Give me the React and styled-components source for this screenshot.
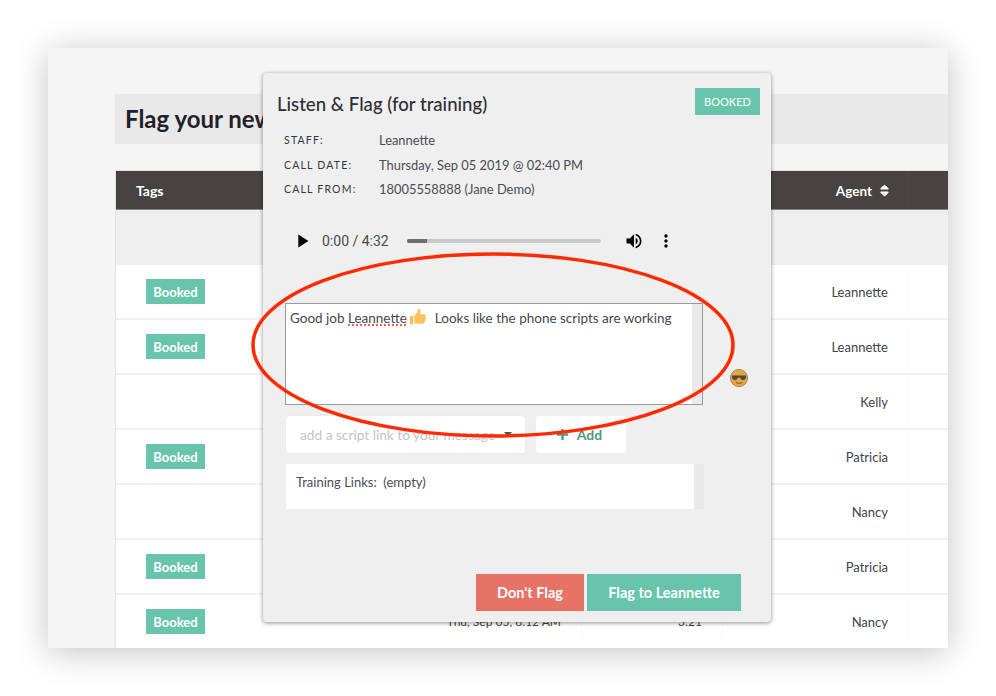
import React from "react";
import styled, { createGlobalStyle } from "styled-components";
import { FaPlus, FaSort } from "react-icons/fa";
import { MdMoreVert, MdPlayArrow, MdVolumeUp } from "react-icons/md";

const GlobalStyle = createGlobalStyle`
  html, body {
    margin: 0;
    background: #fff;
    font-family: "Lato", "Open Sans", sans-serif;
    color: #3c3c3c;
  }
  * { box-sizing: border-box; }
`;

const teal = "#68c4ab";

const Page = styled.div`
  width: 996px;
  height: 696px;
  padding: 48px;
  overflow: hidden;
`;
const Window = styled.div`
  position: relative;
  width: 900px;
  height: 600px;
  background: #f5f5f5;
  box-shadow: 0 4px 32px rgba(0, 0, 0, 0.24);
`;
const Clip = styled.div`
  width: 100%;
  height: 100%;
  padding: 46px 0 0 67px;
  overflow: hidden;
`;
const TitleBar = styled.div`
  height: 50px;
  padding: 0 0 1px 10px;
  background: #e9e9e9;
  display: flex;
  align-items: center;
  font-size: 24px;
  font-weight: 700;
  color: #1f2226;
`;
const Table = styled.div`
  margin: 26px 0 0 0;
  border-left: 1px solid #e4e4e4;
  border-top: 1px solid #e2e2e2;
`;
const columns = "311px 155px 141px 185px 1fr";
const HeaderRow = styled.div`
  display: grid;
  grid-template-columns: ${columns};
  height: 39px;
  background: #474342;
  border-bottom: 1px solid #8a8786;
  color: #fff;
  font-weight: 700;
`;
const HeaderCell = styled.div`
  display: flex;
  align-items: center;
  justify-content: ${(p) => (p.$left ? "flex-start" : "flex-end")};
  gap: 5px;
  padding: ${(p) => (p.$left ? "0 0 0 20px" : "1px 15px 0 0")};
  border-right: ${(p) => (p.$line ? "1px solid #4c4847" : "none")};
  font-size: ${(p) => (p.$left ? 14 : 13.500)}px;
  svg { font-size: 15px; }
`;
const FilterRow = styled.div`
  height: 55px;
  background: #efefef;
`;
const Row = styled.div`
  display: grid;
  grid-template-columns: ${columns};
  height: 55px;
  padding-bottom: 2px;
  background: #fff;
  box-shadow: inset 0 -2px 0 #f1f1f1;
  font-size: 12px;
  color: #40444a;
`;
const Cell = styled.div`
  display: flex;
  align-items: center;
  justify-content: ${(p) => (p.$left ? "flex-start" : "flex-end")};
  padding: ${(p) => (p.$left ? "0 0 0 30px" : "0 20px 0 0")};
  border-right: 1px solid ${(p) => (p.$line ? "#fafafa" : "transparent")};
  margin: 3px 0;
`;
const AgentCell = styled(Cell)`
  padding-right: 19px;
  font-size: 13px;
`;
const Tag = styled.span`
  width: 59px;
  height: 25px;
  background: ${teal};
  color: #fff;
  font-size: 13px;
  font-weight: 700;
  display: flex;
  align-items: center;
  justify-content: center;
`;

const Modal = styled.div`
  position: absolute;
  left: 215px;
  top: 25px;
  width: 508px;
  height: 549px;
  padding: 15px 11px 0 15px;
  display: flex;
  flex-direction: column;
  background: #efefef;
  border-radius: 4px;
  box-shadow: 0 1px 4px rgba(0, 0, 0, 0.45);
`;
const ModalHead = styled.div`
  display: flex;
  justify-content: space-between;
  align-items: flex-start;
`;
const ModalTitle = styled.h2`
  margin: 5px 0 0 -1px;
  font-size: 18.600px;
  line-height: 22px;
  font-weight: 500;
  color: #2d2f33;
`;
const StatusBadge = styled.span`
  width: 65px;
  height: 27px;
  background: ${teal};
  color: #f2fbf8;
  font-size: 11px;
  font-weight: 500;
  display: flex;
  align-items: center;
  justify-content: center;
`;
const Details = styled.div`
  margin: 0 0 0 6px;
  padding-top: 13px;
  display: grid;
  grid-template-columns: 95px 1fr;
  grid-auto-rows: 24.5px;
  align-items: center;
`;
const Label = styled.span`
  font-size: 10.5px;
  letter-spacing: 1.2px;
  color: #33363a;
`;
const Value = styled.span`
  font-size: 12.900px;
  color: #4a4d52;
`;
const Player = styled.div`
  margin: 27px 0 0 14px;
  height: 24px;
  display: flex;
  align-items: center;
  font-family: "Roboto", sans-serif;
  font-size: 14px;
  color: #4b4b4b;
`;
const PlayIcon = styled(MdPlayArrow)`
  font-size: 22px;
  margin-left: -1px;
  color: #000;
`;
const Time = styled.span`
  margin-left: 9px;
  width: 70px;
  white-space: nowrap;
`;
const Track = styled.div`
  margin-left: 15px;
  width: 194px;
  height: 4px;
  border-radius: 2px;
  background: #c8c8c8;
  overflow: hidden;
`;
const TrackFill = styled.div`
  height: 100%;
  background: #6e6e6e;
`;
const VolumeIcon = styled(MdVolumeUp)`
  margin-left: 23px;
  font-size: 20px;
  color: #000;
`;
const MoreIcon = styled(MdMoreVert)`
  margin-left: 12px;
  font-size: 20px;
  color: #000;
`;
const MessageRow = styled.div`
  margin: 50px 0 0 7px;
  display: flex;
  align-items: flex-end;
`;
const MessageBox = styled.div`
  width: 418px;
  height: 102px;
  border: 1px solid #9b9b9b;
  background: #fff;
  display: flex;
`;
const MessageText = styled.div`
  flex: 1;
  padding: 4px;
  font-size: 13.500px;
  line-height: 17px;
  color: #45484d;
  white-space: pre;
  display: block;
`;
const Misspelled = styled.span`
  text-decoration: underline dotted #f0605f 2px;
  text-underline-offset: 2px;
`;
const InlineEmoji = styled.svg`
  width: 18px;
  height: 18px;
  margin: 0 8px 0 2px;
  vertical-align: -3px;
`;
const ScrollTrack = styled.div`
  width: 10px;
  background: #e9e9e9;
`;
const EmojiButton = styled.svg`
  width: 18px;
  height: 18px;
  margin: 0 0 18px 27px;
  flex: none;
`;
const LinkRow = styled.div`
  margin: 11px 0 0 8px;
  display: flex;
  gap: 11px;
`;
const Select = styled.div`
  width: 239px;
  height: 37px;
  padding: 0 14px;
  background: #fff;
  border-radius: 3px;
  box-shadow: 0 0 1px rgba(0, 0, 0, 0.12);
  display: flex;
  align-items: center;
  justify-content: space-between;
  font-size: 13.700px;
  color: #c4c4c4;
`;
const Caret = styled.span`
  width: 0;
  height: 0;
  border: 4px solid transparent;
  border-top: 5px solid #555;
  margin-top: 5px;
  margin-right: -1px;
`;
const AddButton = styled.div`
  width: 90px;
  height: 37px;
  padding-right: 4px;
  background: #fff;
  border-radius: 3px;
  display: flex;
  align-items: center;
  justify-content: center;
  gap: 8px;
  font-size: 14px;
  font-weight: 700;
  color: #4f9a81;
  svg { font-size: 13px; }
`;
const LinksBox = styled.div`
  margin: 11px 0 0 8px;
  width: 418px;
  height: 45px;
  display: flex;
`;
const LinksText = styled.div`
  flex: 1;
  background: #fff;
  padding: 10px;
  font-size: 13px;
  line-height: 17px;
  color: #4a4d52;
  white-space: pre;
`;
const Actions = styled.div`
  margin: auto 19px 11px 0;
  display: flex;
  justify-content: flex-end;
  gap: 3px;
`;
const ActionButton = styled.div`
  width: ${(p) => p.$width}px;
  height: 37px;
  padding-bottom: 1px;
  background: ${(p) => p.$color};
  color: #fff;
  font-size: 14.500px;
  font-weight: 700;
  display: flex;
  align-items: center;
  justify-content: center;
`;
const Ring = styled.svg`
  position: absolute;
  left: 202px;
  top: 202px;
  width: 490px;
  height: 190px;
  pointer-events: none;
`;

const rows = [
  { agent: "Leannette", booked: true },
  { agent: "Leannette", booked: true },
  { agent: "Kelly" },
  { agent: "Patricia", booked: true },
  { agent: "Nancy" },
  { agent: "Patricia", booked: true },
  { agent: "Nancy", booked: true, date: "Thu, Sep 05, 8:12 AM", length: "3:21" },
];

const ThumbsUp = () => (
  <InlineEmoji viewBox="0 0 20 20">
    <path
      fill="#f6c35f"
      d="M1 9h4v9H1zM6 9l3-4c1-1 1-3 1-4 2-1 3 1 3 3l-1 3h5c2 0 2 2 1 3 1 1 1 2 0 3 0 1 0 2-1 2.500 0 1-.5 2-2 2H9c-1 0-2-.5-3-1z"
    />
  </InlineEmoji>
);

const CoolFace = () => (
  <EmojiButton viewBox="0 0 18 18">
    <circle cx="9" cy="9" r="8.600" fill="#e8a53f" stroke="#8a7a5e" strokeWidth="0.800" />
    <path fill="#4a4a48" d="M2 6.500h14v1.500c0 2-1.500 3-3 3s-2.500-1-3-2.500H8C7.500 10 6.500 11 5 11S2 10 2 8z" />
    <path fill="none" stroke="#7a5526" strokeWidth="1" d="M6 13.500c2 1 4 1 6 0" />
  </EmojiButton>
);

const App = () => {
  return (
    <Page>
      <GlobalStyle />
      <Window>
        <Clip>
          <TitleBar>Flag your new</TitleBar>
          <Table>
            <HeaderRow>
              <HeaderCell $left>Tags</HeaderCell>
              <HeaderCell />
              <HeaderCell />
              <HeaderCell $line>
                Agent <FaSort />
              </HeaderCell>
              <HeaderCell />
            </HeaderRow>
            <FilterRow />
            {rows.map((row, i) => (
              <Row key={i}>
                <Cell $left>{row.booked && <Tag>Booked</Tag>}</Cell>
                <Cell $line>{row.date}</Cell>
                <Cell $line>{row.length}</Cell>
                <AgentCell $line>{row.agent}</AgentCell>
                <Cell />
              </Row>
            ))}
          </Table>
        </Clip>

        <Modal>
          <ModalHead>
            <ModalTitle>Listen &amp; Flag (for training)</ModalTitle>
            <StatusBadge>BOOKED</StatusBadge>
          </ModalHead>
          <Details>
            <Label>STAFF:</Label>
            <Value>Leannette</Value>
            <Label>CALL DATE:</Label>
            <Value>Thursday, Sep 05 2019 @ 02:40 PM</Value>
            <Label>CALL FROM:</Label>
            <Value>18005558888 (Jane Demo)</Value>
          </Details>
          <Player>
            <PlayIcon />
            <Time>0:00 / 4:32</Time>
            <Track>
              <TrackFill style={{ width: `${(20 / 194) * 100}%` }} />
            </Track>
            <VolumeIcon />
            <MoreIcon />
          </Player>
          <MessageRow>
            <MessageBox>
              <MessageText>
                Good job <Misspelled>Leannette</Misspelled>
                <ThumbsUp />
                Looks like the phone scripts are working
              </MessageText>
              <ScrollTrack />
            </MessageBox>
            <CoolFace />
          </MessageRow>
          <LinkRow>
            <Select>
              add a script link to your message
              <Caret />
            </Select>
            <AddButton>
              <FaPlus /> Add
            </AddButton>
          </LinkRow>
          <LinksBox>
            <LinksText>Training Links:  (empty)</LinksText>
            <ScrollTrack />
          </LinksBox>
          <Actions>
            <ActionButton $width={108} $color="#e67365">
              Don't Flag
            </ActionButton>
            <ActionButton $width={154} $color={teal}>
              Flag to Leannette
            </ActionButton>
          </Actions>
        </Modal>

        <Ring viewBox="0 0 490 190">
          <ellipse cx="243" cy="95" rx="240" ry="91" fill="none" stroke="#ff2a00" strokeWidth="3.500" />
        </Ring>
      </Window>
    </Page>
  );
};

export default App;
